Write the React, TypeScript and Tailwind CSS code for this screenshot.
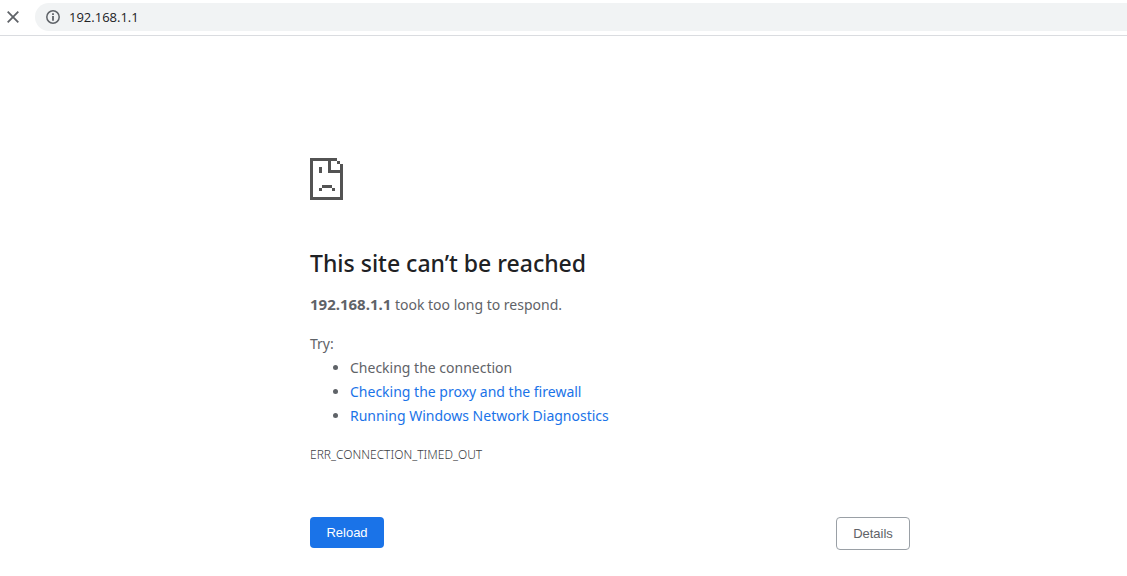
import React from "react";

function CloseIcon() {
  return (
    <svg width="12" height="12" viewBox="0 0 12 12" aria-hidden="true">
      <path d="M0.7 0.7 L11.3 11.3 M11.3 0.7 L0.7 11.3" stroke="#5f6368" strokeWidth="1.8" fill="none" />
    </svg>
  );
}

function InfoIcon() {
  return (
    <svg width="14" height="14" viewBox="0 0 14 14" aria-hidden="true">
      <circle cx="7" cy="7" r="6.2" stroke="#5f6368" strokeWidth="1.5" fill="none" />
      <path d="M6.1 3.2h1.8v1.8H6.1z M6.1 6.1h1.8v4.6H6.1z" fill="#5f6368" />
    </svg>
  );
}

function SadPageIcon() {
  return (
    <svg width="33" height="42" viewBox="0 0 33 42" shapeRendering="crispEdges" role="img" aria-label="Error">
      <path
        fill="#535353"
        fillRule="evenodd"
        d="M0 0h27v3H21v9h9V6h3v36H0z M3 3v36h27V15H18V3z M27 3h3v3h-3z M9 9h3v6H9z M12 27h10v3H12z M9 30h3v3H9z M22 30h3v3h-3z"
      />
    </svg>
  );
}

export default function App() {
  return (
    <div className="min-h-screen bg-white font-['Noto_Sans',sans-serif] text-[#5f6368]">
      <header className="flex h-9 items-center gap-4 border-b border-[#dadce0] pb-1 pl-[7px] pt-[3px]">
        <button type="button" aria-label="Stop loading" className="shrink-0">
          <CloseIcon />
        </button>
        <div className="flex h-7 flex-1 items-center gap-[9px] rounded-l-full bg-[#f1f3f4] pl-[11px]">
          <InfoIcon />
          <input
            aria-label="Address"
            defaultValue="192.168.1.1"
            className="h-7 min-w-0 flex-1 bg-transparent font-['Open_Sans',sans-serif] text-[13px] text-[#202124] outline-none"
          />
        </div>
      </header>

      <main className="pl-[93px] pt-[122px]">
        <div className="mx-auto max-w-[600px] text-[14px] leading-6">
          <SadPageIcon />
          <h1 className="mt-12 text-[23px] leading-[30px] font-medium text-[#202124]">This site can’t be reached</h1>
          <p className="mt-[14px]">
            <strong className="text-[15px] font-bold">192.168.1.1</strong> took too long to respond.
          </p>
          <p className="mt-[15px]">Try:</p>
          <ul className="list-disc pl-10">
            <li>Checking the connection</li>
            <li>
              <a href="#proxy" className="text-[#1a73e8]">Checking the proxy and the firewall</a>
            </li>
            <li>
              <a href="#diagnostics" className="text-[#1a73e8]">Running Windows Network Diagnostics</a>
            </li>
          </ul>
          <p className="mt-[15px] text-xs leading-6 font-light text-[#3c4043]">ERR_CONNECTION_TIMED_OUT</p>
          <div className="mt-[50px] flex items-start justify-between font-['Liberation_Sans',sans-serif] text-[13px]">
            <button type="button" className="h-[31px] min-w-[74px] rounded bg-[#1a73e8] px-4 font-medium text-white">
              Reload
            </button>
            <button type="button" className="h-[33px] min-w-[74px] rounded border border-[#9aa0a6] px-4">
              Details
            </button>
          </div>
        </div>
      </main>
    </div>
  );
}
